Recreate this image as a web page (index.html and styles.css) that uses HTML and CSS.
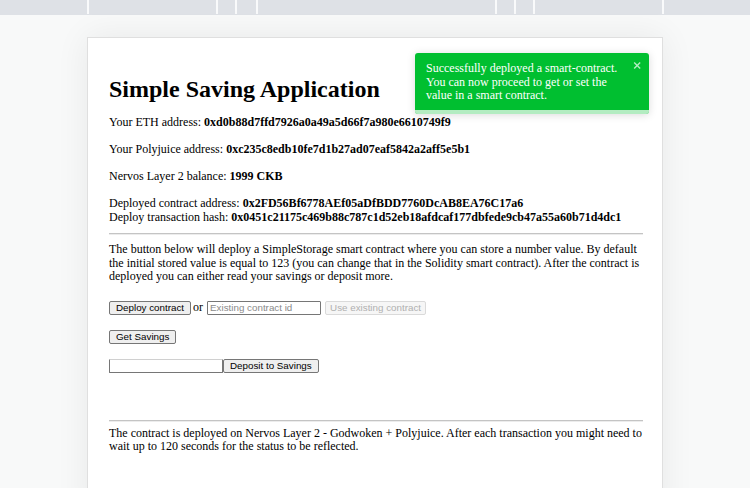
FILE: index.html
```html
<!DOCTYPE html>
<html lang="en">
<head>
<meta charset="utf-8">
<title>Simple Saving Application</title>
<link rel="stylesheet" href="styles.css">
</head>
<body>
<div class="topbar">
  <div class="topbar-cells">
    <span class="cell"></span><span class="cell"></span><span class="cell"></span><span class="cell"></span><span class="cell"></span><span class="cell"></span><span class="cell"></span><span class="cell"></span><span class="cell"></span>
  </div>
</div>

<main class="card">
  <h1 class="title">Simple Saving Application</h1>
  <div class="info">
    Your ETH address: <b>0xd0b88d7ffd7926a0a49a5d66f7a980e6610749f9</b><br><br>
    Your Polyjuice address: <b>0xc235c8edb10fe7d1b27ad07eaf5842a2aff5e5b1</b><br><br>
    Nervos Layer 2 balance: <b>1999 CKB</b><br><br>
    Deployed contract address: <b>0x2FD56Bf6778AEf05aDfBDD7760DcAB8EA76C17a6</b><br>
    Deploy transaction hash: <b>0x0451c21175c469b88c787c1d52eb18afdcaf177dbfede9cb47a55a60b71d4dc1</b>
  </div>
  <hr class="divider">
  <p class="intro">The button below will deploy a SimpleStorage smart contract where you can store a number value. By default the initial stored value is equal to 123 (you can change that in the Solidity smart contract). After the contract is deployed you can either read your savings or deposit more.</p>
  <div class="controls">
    <div class="row">
      <button class="btn">Deploy contract</button>
      <span class="or">or</span>
      <input class="field" type="text" placeholder="Existing contract id">
      <button class="btn btn-disabled" disabled>Use existing contract</button>
    </div>
    <div class="row">
      <button class="btn">Get Savings</button>
    </div>
    <div class="row">
      <input class="field field-amount" type="number">
      <button class="btn">Deposit to Savings</button>
    </div>
  </div>
  <hr class="divider divider-bottom">
  <p class="footnote">The contract is deployed on Nervos Layer 2 - Godwoken + Polyjuice. After each transaction you might need to wait up to 120 seconds for the status to be reflected.</p>
</main>

<div class="toast" role="alert">
  <div class="toast-body">Successfully deployed a smart-contract. You can now proceed to get or set the value in a smart contract.</div>
  <button class="toast-close" aria-label="close">
    <svg width="9.4" height="10.7" viewBox="0 0 14 16" aria-hidden="true"><path d="M7.71 8.23l3.75 3.75-1.48 1.48-3.75-3.75-3.75 3.75L1 11.98l3.75-3.75L1 4.48 2.48 3l3.75 3.75L9.98 3l1.48 1.48-3.75 3.75z"/></svg>
  </button>
  <div class="toast-progress"></div>
</div>
</body>
</html>
```
FILE: styles.css
```css
html {
  overflow: hidden;
}

body {
  margin: 0;
  background: #f8f9f9;
  font-family: "Liberation Serif", "Times New Roman", serif;
  font-size: 12px;
  color: #000;
}

.topbar {
  background: #dee1e6;
  padding-bottom: 1px;
}

.topbar-cells {
  display: grid;
  grid-template-columns: 87px 127px 17px 19px 237px 17px 17px 127px 1fr;
  gap: 2px;
  height: 14px;
  background: #f9fafb;
}

.cell {
  background: #dee1e6;
}

.card {
  display: block;
  box-sizing: border-box;
  width: 576px;
  margin: 22px auto 0;
  padding: 20px 19px 60px 21px;
  background: #fff;
  border: 1px solid #dfdfdf;
  box-shadow: 0 0 32px rgba(0, 0, 0, 0.07);
}

.title {
  font-size: 24px;
  line-height: 28px;
  font-weight: bold;
  margin: 17px 0 13px;
}

.info {
  line-height: 13.5px;
}

.divider {
  height: 0;
  border: 0;
  border-top: 1px solid #c4c4c4;
  border-bottom: 1px solid #ececec;
  margin: 9px 0 8px;
}

.divider-bottom {
  margin: 47px 0 5px;
}

.intro,
.footnote {
  margin: 0;
  line-height: 13.5px;
}

.controls {
  display: flex;
  flex-direction: column;
  gap: 15px;
  margin-top: 17px;
}

.row {
  display: flex;
  align-items: center;
  height: 14px;
}

.btn {
  box-sizing: border-box;
  height: 14px;
  margin: 0;
  padding: 0 6px;
  font-family: "Liberation Sans", Arial, sans-serif;
  font-size: 9.8px;
  line-height: 12px;
  color: #000;
  background: #efefef;
  border: 1px solid #767676;
  border-radius: 2px;
}

.btn-disabled {
  margin-left: 4px;
  padding: 0 4px;
  color: #b0b0b0;
  background: #f6f6f6;
  border-color: #dadada;
}

.or {
  margin: 0 4px 0 2px;
}

.field {
  box-sizing: border-box;
  width: 114px;
  height: 14px;
  margin: 0;
  padding: 0 2px;
  font-family: "Liberation Sans", Arial, sans-serif;
  font-size: 9.8px;
  border: 1px solid #767676;
  border-radius: 1px;
  background: #fff;
}

.field::placeholder {
  color: #8a8a8a;
}

.field-amount {
  border-top-color: #d0d0d0;
}

.toast {
  position: absolute;
  top: 53px;
  left: 415px;
  width: 234px;
  box-sizing: border-box;
  display: flex;
  align-items: flex-start;
  padding: 9px 7px 11px 11px;
  background: #00bf30;
  color: #fff;
  border-radius: 3px;
  box-shadow: 0 1px 8px rgba(0, 0, 0, 0.15);
  overflow: hidden;
}

.toast-body {
  flex: 1;
  line-height: 13.5px;
}

.toast-close {
  margin: -2.5px 0 0;
  padding: 0;
  border: 0;
  background: none;
  line-height: 0;
}

.toast-close svg {
  fill: #fff;
  opacity: 0.7;
}

.toast-progress {
  position: absolute;
  left: 0;
  bottom: 0;
  width: 100%;
  height: 3.5px;
  background: rgba(255, 255, 255, 0.7);
}
```
